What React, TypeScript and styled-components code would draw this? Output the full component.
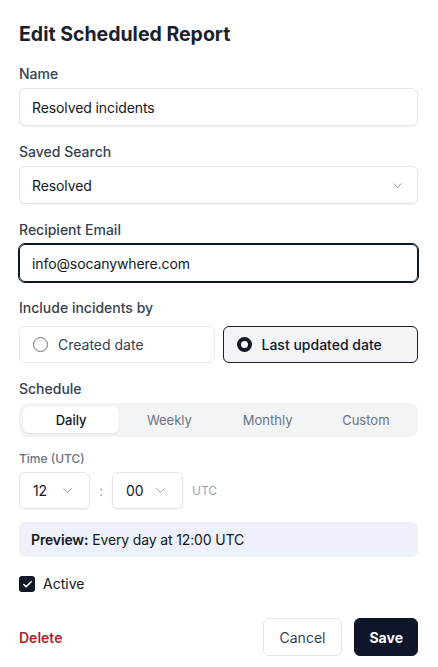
import React, { useState } from 'react'
import styled, { createGlobalStyle } from 'styled-components'
import { ChevronDown, Check } from 'lucide-react'

const GlobalStyle = createGlobalStyle`
  * { box-sizing: border-box; }
  body {
    margin: 0;
    background: #ffffff;
    font-family: Inter, "Liberation Sans", sans-serif;
    color: #111827;
  }
`

const StyledForm = styled.div`
  padding: 20px 20px 0 19px;
  width: 438px;
  display: flex;
  flex-direction: column;
`

const StyledTitle = styled.h1`
  margin: 0 0 16px;
  font-size: 19.5px;
  line-height: 28px;
  font-weight: 700;
  color: #1a1f2e;
`

const StyledField = styled.div<{ $gap?: number; $mb?: number }>`
  display: flex;
  flex-direction: column;
  gap: ${(p) => p.$gap ?? 4}px;
  margin-bottom: ${(p) => p.$mb ?? 16}px;
`

const StyledLabel = styled.label<{ $small?: boolean }>`
  font-size: ${(p) => (p.$small ? 12 : 14)}px;
  line-height: ${(p) => (p.$small ? 16 : 20)}px;
  font-weight: 500;
  color: ${(p) => (p.$small ? '#6b7280' : '#374151')};
`

const StyledInput = styled.div<{ $focused?: boolean }>`
  height: 38px;
  width: 100%;
  display: flex;
  align-items: center;
  justify-content: space-between;
  padding: 0 12px;
  font-size: 14px;
  letter-spacing: -0.1px;
  color: #111827;
  background: #fff;
  border: 1px solid ${(p) => (p.$focused ? '#0f172a' : '#e2e5ea')};
  outline: ${(p) => (p.$focused ? '1px solid #0f172a' : 'none')};
  border-radius: 6px;
  box-shadow: 0 1px 2px rgba(16, 24, 40, 0.06);
`

const StyledChevron = styled(ChevronDown)`
  color: #8b919c;
  flex-shrink: 0;
`

const StyledCards = styled.div`
  display: grid;
  grid-template-columns: 1fr 1fr;
  gap: 8px;
`

const StyledCard = styled.div<{ $active?: boolean }>`
  height: 37px;
  display: flex;
  align-items: center;
  gap: 10px;
  padding: 0 13px;
  font-size: 14px;
  font-weight: ${(p) => (p.$active ? 500 : 400)};
  color: ${(p) => (p.$active ? '#111827' : '#374151')};
  background: ${(p) => (p.$active ? '#f3f4f8' : '#fff')};
  border: 1px solid ${(p) => (p.$active ? '#1a1f2e' : '#e7e9ed')};
  border-radius: 6px;
`

const StyledRadio = styled.span<{ $checked?: boolean }>`
  width: 15px;
  height: 15px;
  border-radius: 50%;
  flex-shrink: 0;
  border: ${(p) => (p.$checked ? '4.5px solid #111827' : '1px solid #6b7280')};
  background: #fff;
`

const StyledSegments = styled.div`
  height: 34px;
  padding: 4px;
  display: grid;
  grid-template-columns: repeat(4, 1fr);
  gap: 2px;
  background: #f3f4f6;
  border-radius: 8px;
`

const StyledSegment = styled.button<{ $active?: boolean }>`
  border: none;
  font-family: inherit;
  font-size: 13px;
  font-weight: ${(p) => (p.$active ? 500 : 400)};
  color: ${(p) => (p.$active ? '#111827' : '#6b7280')};
  background: ${(p) => (p.$active ? '#fff' : 'transparent')};
  border-radius: 6px;
  box-shadow: ${(p) => (p.$active ? '0 1px 2px rgba(0,0,0,0.08)' : 'none')};
  padding: 0;
`

const StyledTimeRow = styled.div`
  display: flex;
  align-items: center;
`

const StyledTimeSelect = styled(StyledInput)`
  width: 71px;
  height: 37px;
  padding: 0 14px 0 13px;
`

const StyledColon = styled.span`
  width: 22px;
  text-align: center;
  font-size: 14px;
  color: #9ca3af;
`

const StyledMuted = styled.span`
  margin-left: 9px;
  font-size: 12px;
  color: #9ca3af;
`

const StyledPreview = styled.div`
  height: 35px;
  display: flex;
  align-items: center;
  padding: 0 12px;
  font-size: 14px;
  letter-spacing: -0.15px;
  color: #111827;
  background: #eef0fa;
  border-radius: 6px;
  margin-bottom: 19px;

  b {
    font-weight: 600;
    margin-right: 4px;
  }
`

const StyledCheckRow = styled.label`
  display: flex;
  align-items: center;
  gap: 8px;
  font-size: 14px;
  line-height: 16px;
  color: #111827;
  margin-bottom: 26px;
`

const StyledCheckbox = styled.span`
  width: 16px;
  height: 16px;
  border-radius: 3px;
  background: #111827;
  color: #fff;
  display: flex;
  align-items: center;
  justify-content: center;
`

const StyledFooter = styled.div`
  display: flex;
  align-items: center;
  justify-content: space-between;
`

const StyledDelete = styled.button`
  border: none;
  background: none;
  padding: 0;
  font-family: inherit;
  font-size: 14px;
  font-weight: 600;
  color: #a8262b;
`

const StyledActions = styled.div`
  display: flex;
  gap: 12px;
`

const StyledButton = styled.button<{ $primary?: boolean }>`
  height: 38px;
  padding: 0 ${(p) => (p.$primary ? 14 : 16)}px;
  font-family: inherit;
  font-size: 14px;
  font-weight: ${(p) => (p.$primary ? 700 : 400)};
  color: ${(p) => (p.$primary ? '#fff' : '#374151')};
  background: ${(p) => (p.$primary ? '#0f1629' : '#fff')};
  border: 1px solid ${(p) => (p.$primary ? '#0f1629' : '#e2e5ea')};
  border-radius: 6px;
`

const tabs = ['Daily', 'Weekly', 'Monthly', 'Custom']

export default function App() {
  const [tab, setTab] = useState('Daily')
  const [by, setBy] = useState('updated')

  return (
    <>
      <GlobalStyle />
      <StyledForm>
        <StyledTitle>Edit Scheduled Report</StyledTitle>

        <StyledField>
          <StyledLabel>Name</StyledLabel>
          <StyledInput>Resolved incidents</StyledInput>
        </StyledField>

        <StyledField>
          <StyledLabel>Saved Search</StyledLabel>
          <StyledInput>
            Resolved
            <StyledChevron size={15} strokeWidth={1.5} />
          </StyledInput>
        </StyledField>

        <StyledField>
          <StyledLabel>Recipient Email</StyledLabel>
          <StyledInput $focused>info@socanywhere.com</StyledInput>
        </StyledField>

        <StyledField $gap={8}>
          <StyledLabel>Include incidents by</StyledLabel>
          <StyledCards>
            <StyledCard $active={by === 'created'} onClick={() => setBy('created')}>
              <StyledRadio $checked={by === 'created'} />
              Created date
            </StyledCard>
            <StyledCard $active={by === 'updated'} onClick={() => setBy('updated')}>
              <StyledRadio $checked={by === 'updated'} />
              Last updated date
            </StyledCard>
          </StyledCards>
        </StyledField>

        <StyledField $mb={14}>
          <StyledLabel>Schedule</StyledLabel>
          <StyledSegments>
            {tabs.map((t) => (
              <StyledSegment key={t} $active={tab === t} onClick={() => setTab(t)}>
                {t}
              </StyledSegment>
            ))}
          </StyledSegments>
        </StyledField>

        <StyledField $gap={5} $mb={13}>
          <StyledLabel $small>Time (UTC)</StyledLabel>
          <StyledTimeRow>
            <StyledTimeSelect>
              12
              <StyledChevron size={15} strokeWidth={1.5} />
            </StyledTimeSelect>
            <StyledColon>:</StyledColon>
            <StyledTimeSelect>
              00
              <StyledChevron size={15} strokeWidth={1.5} />
            </StyledTimeSelect>
            <StyledMuted>UTC</StyledMuted>
          </StyledTimeRow>
        </StyledField>

        <StyledPreview>
          <b>Preview:</b> Every day at 12:00 UTC
        </StyledPreview>

        <StyledCheckRow>
          <StyledCheckbox>
            <Check size={11} strokeWidth={3.5} />
          </StyledCheckbox>
          Active
        </StyledCheckRow>

        <StyledFooter>
          <StyledDelete>Delete</StyledDelete>
          <StyledActions>
            <StyledButton>Cancel</StyledButton>
            <StyledButton $primary>Save</StyledButton>
          </StyledActions>
        </StyledFooter>
      </StyledForm>
    </>
  )
}
